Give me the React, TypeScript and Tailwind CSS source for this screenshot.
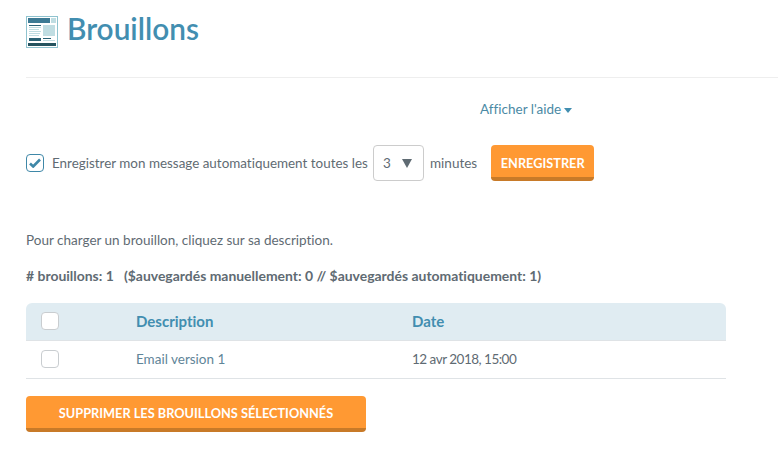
const font = "font-['Lato','Noto_Sans',sans-serif]";

function PageIcon() {
  return (
    <svg width="33" height="33" viewBox="0 0 33 33" className="shrink-0">
      <rect x="0.5" y="0.5" width="31" height="31" fill="#fff" stroke="#8fc3cf" />
      <rect x="2" y="2" width="22" height="5" fill="#3d7a94" />
      <rect x="25" y="2" width="5" height="5" fill="#c0dde2" />
      <rect x="3" y="9" width="12" height="1" fill="#2f6478" />
      <rect x="3" y="11" width="12" height="1" fill="#c0dde2" />
      <rect x="3" y="13" width="10" height="1" fill="#c0dde2" />
      <rect x="3" y="15" width="12" height="1" fill="#c0dde2" />
      <rect x="3" y="17" width="11" height="1" fill="#c0dde2" />
      <rect x="3" y="19" width="10" height="1" fill="#c0dde2" />
      <rect x="17" y="9" width="12" height="11" fill="#c0dde2" />
      <rect x="3" y="22" width="12" height="3" fill="#2b6275" />
      <rect x="17" y="22" width="8" height="1" fill="#2b6275" />
      <rect x="17" y="24" width="12" height="1" fill="#c0dde2" />
      <rect x="2" y="27" width="28" height="3" fill="#25535f" />
    </svg>
  );
}

function Box({ checked = false }: { checked?: boolean }) {
  return (
    <span
      className={`flex h-[18px] w-[18px] shrink-0 items-center justify-center rounded-[4px] border bg-white ${
        checked ? "border-[#3f88a8]" : "border-[#c9cdd0]"
      }`}
    >
      {checked && (
        <svg width="12" height="10" viewBox="0 0 12 10">
          <path d="M1 5.5 L4.2 8.5 L11 1.5" fill="none" stroke="#3f88a8" strokeWidth="2.6" />
        </svg>
      )}
    </span>
  );
}

function OrangeButton({ children, className }: { children: string; className: string }) {
  return (
    <button
      className={`rounded-[4px] border-b-4 border-[#c87a28] bg-[#ff9933] pt-[4px] text-[12.75px] font-bold text-white ${className}`}
    >
      {children}
    </button>
  );
}

export default function App() {
  return (
    <div className={`min-h-[452px] w-[778px] overflow-hidden bg-white pl-[26px] text-[13.5px] leading-[21px] text-[#5f6b73] [font-variant-ligatures:none] ${font}`}>
      <div className="flex h-[78px] items-start gap-[8px] border-b border-[#eeeeee] pt-[16px]">
        <PageIcon />
        <h1 className="text-[29.8px] leading-[26px] font-semibold text-[#428eb0]">Brouillons</h1>
      </div>

      <div className="mt-[21px] flex items-center justify-start pl-[454px] text-[#4b8aa5]">
        Afficher l'aide
        <span className="mt-[2px] ml-[3px] border-x-[4px] border-t-[5px] border-x-transparent border-t-[#428eb0]" />
      </div>

      <div className="mt-[25px] flex items-center">
        <Box checked />
        <span className="ml-[8px] w-[316px] whitespace-nowrap text-[13.43px]">Enregistrer mon message automatiquement toutes les</span>
        <div className="mr-[6px] ml-[5px] flex h-[36px] w-[51px] items-center justify-between rounded-[4px] border border-[#cccccc] pr-[11px] pl-[9px]">
          3<span className="border-x-[5px] border-t-[9px] border-x-transparent border-t-[#5f6b73]" />
        </div>
        <span>minutes</span>
        <OrangeButton className="ml-[14px] h-[36px] w-[103px]">ENREGISTRER</OrangeButton>
      </div>

      <p className="mt-[49px]">Pour charger un brouillon, cliquez sur sa description.</p>
      <p className="mt-[14px] text-[13.95px] font-bold">
        # brouillons: 1 &nbsp; ($auvegardés manuellement: 0 // $auvegardés automatiquement: 1)
      </p>

      <table className="mt-[17px] w-[700px] border-collapse">
        <thead>
          <tr className="h-[37px] border-b border-[#dfe3e6] bg-[#e0ecf2] text-left text-[15px] font-bold text-[#428eb0]">
            <th className="w-[110px] rounded-tl-[6px] pl-[15px]">
              <Box />
            </th>
            <th className="w-[276px] font-bold">Description</th>
            <th className="rounded-tr-[6px] font-bold">Date</th>
          </tr>
        </thead>
        <tbody>
          <tr className="h-[38px] border-b border-[#dfe3e6]">
            <td className="pl-[15px]">
              <Box />
            </td>
            <td className="text-[#5f8598]">Email version 1</td>
            <td className="tracking-[-0.5px]">12 avr 2018, 15:00</td>
          </tr>
        </tbody>
      </table>

      <OrangeButton className="mt-[17px] block h-[36px] w-[340px]">SUPPRIMER LES BROUILLONS SÉLECTIONNÉS</OrangeButton>
    </div>
  );
}
